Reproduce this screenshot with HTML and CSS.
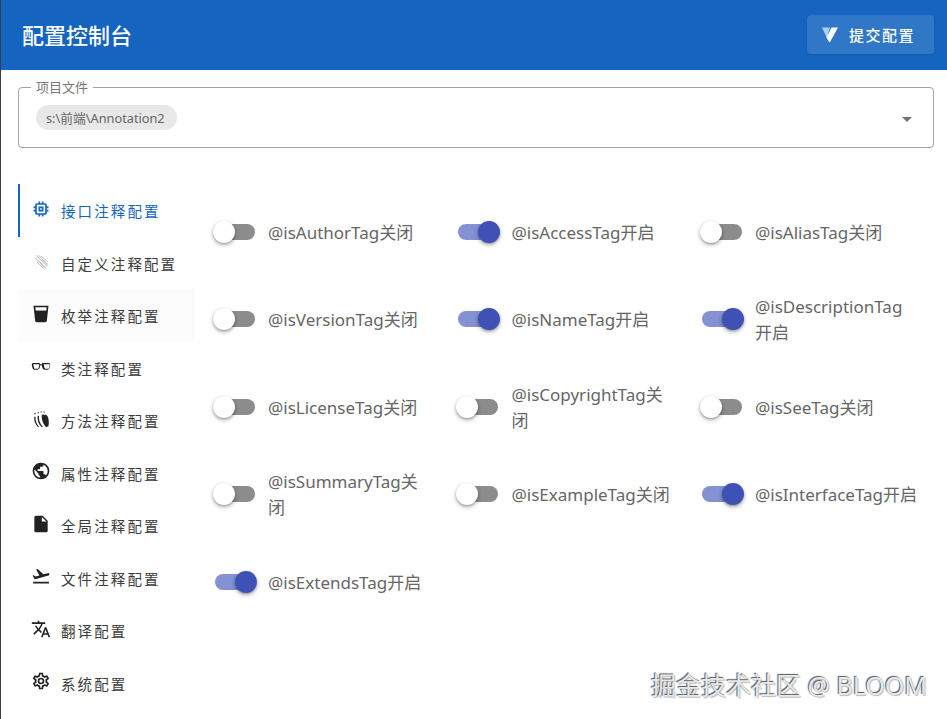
FILE: index.html
```html
<!DOCTYPE html>
<html lang="zh-CN">
<head>
<meta charset="utf-8">
<title>配置控制台</title>
<link rel="stylesheet" href="styles.css">
</head>
<body>
<div class="app">
  <header class="bar">
    <h1 class="title">配置控制台</h1>
    <button class="submit" type="button">
      <svg class="submit-logo" viewBox="0 0 18 18"><path fill="#a6d4f5" d="M2 1.500h8L8 7.500 9 16.500z"/><path fill="#ffffff" d="M18 1.500h-6.500L6.500 11.500 9.800 16.500z"/></svg>
      <span>提交配置</span>
    </button>
  </header>

  <fieldset class="select">
    <legend class="select-label">项目文件</legend>
    <span class="chip">s:\前端\Annotation2</span>
    <span class="caret"></span>
  </fieldset>

  <div class="body">
    <nav class="tabs">
      <a class="tab active"><svg class="ico" viewBox="0 0 24 24"><path d="M17,17H7V7H17M21,11V9H19V7C19,5.89 18.1,5 17,5H15V3H13V5H11V3H9V5H7C5.89,5 5,5.89 5,7V9H3V11H5V13H3V15H5V17A2,2 0 0,0 7,19H9V21H11V19H13V21H15V19H17A2,2 0 0,0 19,17V15H21V13H19V11M13,13H11V11H13M15,9H9V15H15V9Z"/></svg><span>接口注释配置</span></a>
      <a class="tab"><svg class="ico faint" viewBox="0 0 24 24"><path d="M6 5l14 14M9 5l11 11M5 8l13 13M12 6l8 7M7 13l8 8M14 11l6 6M10 13l7 7" fill="none" stroke="currentColor" stroke-width=".9"/></svg><span>自定义注释配置</span></a>
      <a class="tab hover"><svg class="ico" viewBox="0 0 24 24"><path d="M18.32,8H5.67L5.23,4H18.77M3,2L5,20.23C5.13,21.23 5.97,22 7,22H17C18,22 18.87,21.23 19,20.23L21,2H3Z"/><path d="M5.500 8h13L17 21H7z"/></svg><span>枚举注释配置</span></a>
      <a class="tab"><svg class="ico wide" viewBox="0 0 24 24"><path d="M3 8.500h6.500c.8 0 1.500.6 1.500 1.500 .7-.3 1.300-.3 2 0 0-.9.7-1.500 1.500-1.500H21c1.500 0 2.300 1 2 2.500l-.7 3c-.3 1.500-1.500 2.500-3 2.500h-2.800c-1.400 0-2.600-1-2.900-2.300l-.7-2.900c-.5-.2-1.300-.2-1.800 0l-.7 2.900c-.3 1.300-1.500 2.300-2.900 2.300H4.700c-1.500 0-2.700-1-3-2.500l-.7-3C.7 9.500 1.500 8.500 3 8.500zm-.3 1.400l.9 4.100c.1.800.6 1.300 1.300 1.300h3c.6 0 1.100-.4 1.200-.9l1-4.500zm12.500 0l1 4.500c.1.500.6.900 1.200.9h3c.7 0 1.200-.5 1.300-1.300l.9-4.100z"/></svg><span>类注释配置</span></a>
      <a class="tab"><svg class="ico" viewBox="0 0 24 24"><path d="M4 9c-.8 5 1 9 4.500 13l1.100-.7C6.500 17.500 5 13.500 5.500 9.500zM8 8c-.8 5 1 10 5 14l1.300-.5C10.500 17.500 9 13 9.600 8.500zM13 7c-.6 5 1 11 5.500 15l2.500-1.500c.8-4.500.5-9-1.500-12.500l-2-1.500-1 1-1.500-1z"/><path d="M4 5.500h1.500M8 4.500h1.500M11.500 3.500H13M15 3.500h1.500" stroke="currentColor" stroke-width="1.300"/></svg><span>方法注释配置</span></a>
      <a class="tab"><svg class="ico" viewBox="0 0 24 24"><path d="M17.9,17.39C17.64,16.59 16.89,16 16,16H15V13A1,1 0 0,0 14,12H8V10H10A1,1 0 0,0 11,9V7H13A2,2 0 0,0 15,5V4.59C17.93,5.77 20,8.64 20,12C20,14.08 19.2,15.97 17.9,17.39M11,19.93C7.05,19.44 4,16.08 4,12C4,11.38 4.08,10.78 4.21,10.21L9,15V16A2,2 0 0,0 11,18M12,2A10,10 0 0,0 2,12A10,10 0 0,0 12,22A10,10 0 0,0 22,12A10,10 0 0,0 12,2Z"/></svg><span>属性注释配置</span></a>
      <a class="tab"><svg class="ico" viewBox="0 0 24 24"><path d="M13,9V3.5L18.5,9M6,2C4.89,2 4,2.89 4,4V20A2,2 0 0,0 6,22H18A2,2 0 0,0 20,20V8L14,2H6Z"/></svg><span>全局注释配置</span></a>
      <a class="tab"><svg class="ico" viewBox="0 0 24 24"><path d="M2.5,19H21.5V21H2.5V19M22.07,9.64C21.86,8.84 21.03,8.36 20.23,8.58L14.92,10L8,3.57L6.09,4.08L10.23,11.25L5.26,12.58L3.29,11.04L1.84,11.43L3.66,14.59L4.43,15.92L6.03,15.5L11.34,14.07L15.69,12.91L21,11.5C21.81,11.26 22.28,10.44 22.07,9.64Z"/></svg><span>文件注释配置</span></a>
      <a class="tab"><svg class="ico" viewBox="0 0 24 24"><path d="M12.87,15.07L10.33,12.56L10.36,12.53C12.1,10.59 13.34,8.36 14.07,6H17V4H10V2H8V4H1V6H12.17C11.5,7.92 10.44,9.75 9,11.35C8.07,10.32 7.3,9.19 6.69,8H4.69C5.42,9.63 6.42,11.17 7.67,12.56L2.58,17.58L4,19L9,14L12.11,17.11L12.87,15.07M18.5,10H16.5L12,22H14L15.12,19H19.87L21,22H23L18.5,10M15.88,17L17.5,12.67L19.12,17H15.88Z"/></svg><span>翻译配置</span></a>
      <a class="tab"><svg class="ico" viewBox="0 0 24 24"><path d="M12,8A4,4 0 0,1 16,12A4,4 0 0,1 12,16A4,4 0 0,1 8,12A4,4 0 0,1 12,8M12,10A2,2 0 0,0 10,12A2,2 0 0,0 12,14A2,2 0 0,0 14,12A2,2 0 0,0 12,10M10,22C9.75,22 9.54,21.82 9.5,21.58L9.13,18.93C8.5,18.68 7.96,18.34 7.44,17.94L4.95,18.95C4.73,19.03 4.46,18.95 4.34,18.73L2.34,15.27C2.21,15.05 2.27,14.78 2.46,14.63L4.57,12.97L4.5,12L4.57,11L2.46,9.37C2.27,9.22 2.21,8.95 2.34,8.73L4.34,5.27C4.46,5.05 4.73,4.96 4.95,5.05L7.44,6.05C7.96,5.66 8.5,5.32 9.13,5.07L9.5,2.42C9.54,2.18 9.75,2 10,2H14C14.25,2 14.46,2.18 14.5,2.42L14.87,5.07C15.5,5.32 16.04,5.66 16.56,6.05L19.05,5.05C19.27,4.96 19.54,5.05 19.66,5.27L21.66,8.73C21.79,8.95 21.73,9.22 21.54,9.37L19.43,11L19.5,12L19.43,13L21.54,14.63C21.73,14.78 21.79,15.05 21.66,15.27L19.66,18.73C19.54,18.95 19.27,19.04 19.05,18.95L16.56,17.95C16.04,18.34 15.5,18.68 14.87,18.93L14.5,21.58C14.46,21.82 14.25,22 14,22H10M11.25,4L10.88,6.61C9.68,6.86 8.62,7.5 7.85,8.39L5.44,7.35L4.69,8.65L6.8,10.2C6.4,11.37 6.4,12.64 6.8,13.8L4.68,15.36L5.43,16.66L7.86,15.62C8.63,16.5 9.68,17.14 10.87,17.38L11.24,20H12.76L13.13,17.39C14.32,17.14 15.37,16.5 16.14,15.62L18.57,16.66L19.32,15.36L17.2,13.81C17.6,12.64 17.6,11.37 17.2,10.2L19.31,8.65L18.56,7.35L16.15,8.39C15.38,7.5 14.32,6.86 13.13,6.62L12.75,4H11.25Z"/></svg><span>系统配置</span></a>
    </nav>

    <div class="grid">
      <label class="cell"><span class="sw"><span class="thumb"></span></span><span class="lbl">@isAuthorTag关闭</span></label>
      <label class="cell"><span class="sw on"><span class="thumb"></span></span><span class="lbl">@isAccessTag开启</span></label>
      <label class="cell"><span class="sw"><span class="thumb"></span></span><span class="lbl">@isAliasTag关闭</span></label>
      <label class="cell"><span class="sw"><span class="thumb"></span></span><span class="lbl">@isVersionTag关闭</span></label>
      <label class="cell"><span class="sw on"><span class="thumb"></span></span><span class="lbl">@isNameTag开启</span></label>
      <label class="cell"><span class="sw on"><span class="thumb"></span></span><span class="lbl">@isDescriptionTag开启</span></label>
      <label class="cell"><span class="sw"><span class="thumb"></span></span><span class="lbl">@isLicenseTag关闭</span></label>
      <label class="cell"><span class="sw"><span class="thumb"></span></span><span class="lbl">@isCopyrightTag关闭</span></label>
      <label class="cell"><span class="sw"><span class="thumb"></span></span><span class="lbl">@isSeeTag关闭</span></label>
      <label class="cell"><span class="sw"><span class="thumb"></span></span><span class="lbl">@isSummaryTag关闭</span></label>
      <label class="cell"><span class="sw"><span class="thumb"></span></span><span class="lbl">@isExampleTag关闭</span></label>
      <label class="cell"><span class="sw on"><span class="thumb"></span></span><span class="lbl">@isInterfaceTag开启</span></label>
      <label class="cell"><span class="sw on"><span class="thumb"></span></span><span class="lbl">@isExtendsTag开启</span></label>
    </div>
  </div>

  <div class="mark">掘金技术社区 @ BLOOM</div>
</div>
</body>
</html>
```
FILE: styles.css
```css
* { box-sizing: border-box; }
html, body { margin: 0; height: 100%; background: #fff; }
body { font-family: "Noto Sans", "Noto Sans CJK SC", sans-serif; overflow: hidden; }
.app { position: relative; height: 719px; border-left: 1px solid #3a3f44; }

.bar { height: 70px; background: #1565c0; display: flex; align-items: center; justify-content: space-between; padding: 0 13px 0 21px; }
.title { margin: 0; color: #fff; font-size: 22px; font-weight: 500; line-height: 32px; }
.submit { display: flex; align-items: center; width: 127px; height: 39px; padding: 0 0 0 13px; margin-top: -1px; border: 0; border-radius: 4px; background: rgba(255,255,255,.12); color: #fff; font: inherit; font-size: 15px; font-weight: 500; letter-spacing: 1.500px; box-shadow: 0 1px 3px rgba(0,0,0,.12); }
.submit-logo { width: 18px; height: 18px; margin-right: 11px; }

.select { position: relative; margin: 10px 13px 0 17px; padding: 0 0 0 17px; height: 68px; border: 1px solid #a3a3a3; border-radius: 4px; display: flex; align-items: center; min-width: 0; }
.select-label { padding: 0 5px; margin-left: -5px; color: #777; font-size: 13px; line-height: 14px; }
.chip { display: inline-flex; align-items: center; height: 25px; padding: 0 12px 0 10px; margin-top: -7px; border-radius: 13px; background: #e8e8e8; color: #666; font-size: 12.750px; }
.caret { position: absolute; right: 21px; top: 23px; width: 0; height: 0; border-left: 5.500px solid transparent; border-right: 5.500px solid transparent; border-top: 5.500px solid #757575; }

.body { display: flex; margin: 36px 0 0 17px; }
.tabs { width: 177px; flex: none; display: flex; flex-direction: column; }
.tab { display: flex; align-items: center; height: 52.500px; padding-left: 13px; color: #3c3c3c; font-size: 14.500px; letter-spacing: 2.100px; }
.tab span { margin: 2px 0 0 10px; line-height: 20px; white-space: nowrap; }
.tab.active { color: #1565c0; border-left: 2px solid #1565c0; padding-left: 11px; }
.tab.hover { background: #fcfcfc; }
.ico { width: 20px; height: 20px; fill: currentColor; flex: none; color: #222; margin-top: -3px; }
.tab.active .ico { color: #1565c0; }
.ico.faint { color: #a8a8a8; }

.grid { display: grid; grid-template-columns: repeat(3, 243.500px); grid-auto-rows: 87.500px; margin-top: 4px; }
.cell { display: flex; align-items: center; padding-left: 19.600px; }
.sw { position: relative; flex: none; width: 40px; height: 16px; border-radius: 8px; background: #8c8c8c; margin-right: 13.400px; }
.sw.on { background: #8491d2; }
.thumb { position: absolute; left: -2px; top: -3px; width: 22px; height: 22px; border-radius: 50%; background: #fff; box-shadow: 0 2px 4px rgba(0,0,0,.3), 0 1px 2px rgba(0,0,0,.2); }
.sw.on .thumb { left: 20px; background: #3f51b5; }
.lbl { width: 163px; margin-top: 2px; color: #666; font-size: 17px; line-height: 26px; word-break: break-all; }

.mark { position: absolute; right: 20px; bottom: 18px; color: #e8e8e8; font-size: 25px; line-height: 32px; text-shadow: -1px -1px 1px #555, 1px 1px 1px #bbb; }
```
